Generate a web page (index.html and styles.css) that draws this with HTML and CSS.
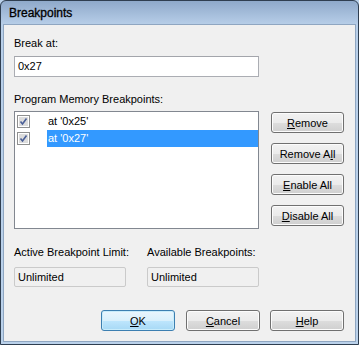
FILE: index.html
```html
<!DOCTYPE html>
<html lang="en">
<head>
    <meta charset="UTF-8">
    <title>Breakpoints</title>
    <link rel="stylesheet" href="styles.css">
</head>
<body>
    <div class="window">
        <div class="titlebar">Breakpoints</div>
        <div class="client">
            <div class="label">Break at:</div>
            <div class="textbox">0x27</div>

            <div class="label label-list">Program Memory Breakpoints:</div>
            <div class="list-row">
                <div class="listbox">
                    <div class="item">
                        <span class="check"><svg width="13" height="13" viewBox="0 0 13 13"><rect x="0.5" y="0.5" width="12" height="12" fill="#fff" stroke="#8e8f8f"/><rect x="2" y="2" width="9" height="9" fill="#dcdcdc"/><path d="M3.5 6.5 L5.5 9 L9.5 3.5" fill="none" stroke="#4a5f97" stroke-width="1.6"/></svg></span>
                        <span class="item-text">at '0x25'</span>
                    </div>
                    <div class="item">
                        <span class="check"><svg width="13" height="13" viewBox="0 0 13 13"><rect x="0.5" y="0.5" width="12" height="12" fill="#fff" stroke="#8e8f8f"/><rect x="2" y="2" width="9" height="9" fill="#dcdcdc"/><path d="M3.5 6.5 L5.5 9 L9.5 3.5" fill="none" stroke="#4a5f97" stroke-width="1.6"/></svg></span>
                        <span class="item-text selected">at '0x27'</span>
                    </div>
                </div>
                <div class="side-buttons">
                    <button class="btn"><u>R</u>emove</button>
                    <button class="btn">Remove A<u>l</u>l</button>
                    <button class="btn"><u>E</u>nable All</button>
                    <button class="btn"><u>D</u>isable All</button>
                </div>
            </div>

            <div class="limits">
                <div class="limit">
                    <div class="label">Active Breakpoint Limit:</div>
                    <div class="readonly">Unlimited</div>
                </div>
                <div class="limit">
                    <div class="label">Available Breakpoints:</div>
                    <div class="readonly">Unlimited</div>
                </div>
            </div>

            <div class="footer">
                <button class="btn btn-default"><u>O</u>K</button>
                <button class="btn"><u>C</u>ancel</button>
                <button class="btn"><u>H</u>elp</button>
            </div>
        </div>
    </div>
</body>
</html>
```

FILE: styles.css
```css
html, body { margin: 0; padding: 0; }
body { font-family: "Liberation Sans", Arial, sans-serif; font-size: 11px; color: #000; background: #bad1ea; }

.window {
    width: 359px;
    height: 345px;
    box-sizing: border-box;
    display: flex;
    flex-direction: column;
    border: 1px solid #2f3e50;
    border-radius: 6px 6px 0 0;
    padding: 0 2px 2px;
    background: linear-gradient(#8fa9ca, #b8cfe9 24px, #bad1ea);
}
.titlebar { height: 23px; line-height: 25px; padding-left: 6px; font-size: 12px; color: #000; -webkit-text-stroke: 0.3px #000; }
.client {
    flex: 1;
    background: #f0f0f0;
    border: 1px solid #8fa6c1;
    padding: 11px 11px 0 10px;
}

.label { height: 14px; line-height: 14px; white-space: nowrap; }
.label-list { margin-top: 15px; }

.textbox {
    margin-top: 6px;
    width: 245px;
    height: 21px;
    box-sizing: border-box;
    border: 1px solid #abadb3;
    border-top-color: #a3a5ab;
    background: #fff;
    padding: 0 3px;
    line-height: 19px;
}

.list-row { display: flex; gap: 12px; margin-top: 5px; }
.listbox {
    width: 245px;
    height: 118px;
    box-sizing: border-box;
    border: 1px solid #828790;
    background: #fff;
    padding-top: 1px;
}
.item { display: flex; align-items: center; height: 17px; }
.check { width: 13px; height: 13px; margin-left: 2px; }
.check svg { display: block; }
.item-text { margin-left: 17px; flex: 1; height: 17px; line-height: 17px; padding-left: 1px; }
.selected { background: #3399ff; color: #fff; }

.side-buttons { display: flex; flex-direction: column; gap: 10px; padding-top: 1px; }

.btn {
    width: 73px;
    height: 21px;
    box-sizing: border-box;
    padding: 0;
    font-family: inherit;
    font-size: 11px;
    color: #000;
    border: 1px solid #707070;
    border-radius: 3px;
    background: linear-gradient(#f2f2f2 0%, #ebebeb 50%, #dddddd 51%, #cfcfcf 100%);
    box-shadow: inset 0 0 0 1px #fcfcfc;
}
.btn-default {
    border-color: #3c7fb1;
    background: linear-gradient(#eaf6fd 0%, #d9f0fc 50%, #bee6fd 51%, #a7d9f5 100%);
    box-shadow: inset 0 0 0 1px #c8ecfb;
}

.limits { display: flex; gap: 21px; margin-top: 16px; }
.limit { width: 112px; }
.readonly {
    margin-top: 8px;
    width: 112px;
    height: 20px;
    box-sizing: border-box;
    border: 1px solid #cacaca;
    border-radius: 2px;
    background: #f0f0f0;
    padding: 0 3px;
    line-height: 18px;
}

.footer { display: flex; justify-content: flex-end; gap: 10px; margin-top: 23px; }
.footer .btn { width: 74px; }
.footer .btn-default { margin-right: 1px; }
```
